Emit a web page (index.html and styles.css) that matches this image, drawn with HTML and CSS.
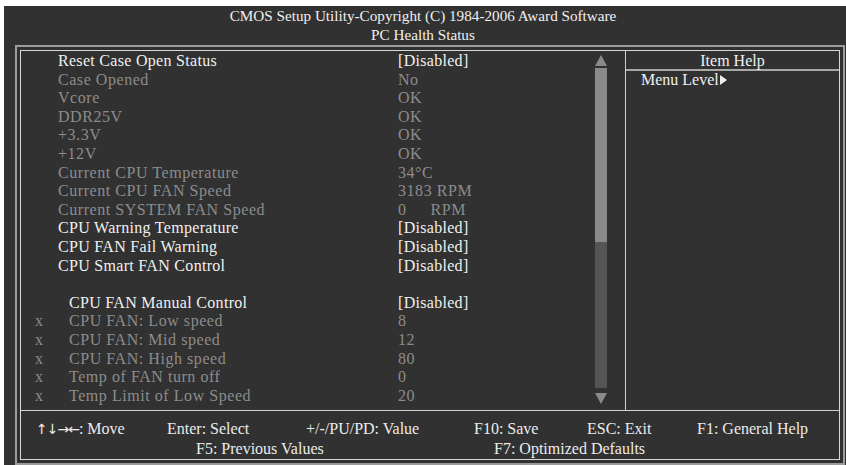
FILE: index.html
```html
<!DOCTYPE html>
<html>
<head>
<meta charset="utf-8">
<link rel="stylesheet" href="styles.css">
</head>
<body>
<div class="screen">
  <div class="title">
    <div>CMOS Setup Utility-Copyright (C) 1984-2006 Award Software</div>
    <div>PC Health Status</div>
  </div>
  <div class="frame">
    <div class="inner">
      <div class="main">
        <div class="left">
          <div class="list">
            <div class="row on"><span class="mk"></span><span class="lb">Reset Case Open Status</span><span class="vl">[Disabled]</span></div>
            <div class="row off"><span class="mk"></span><span class="lb">Case Opened</span><span class="vl">No</span></div>
            <div class="row off"><span class="mk"></span><span class="lb">Vcore</span><span class="vl">OK</span></div>
            <div class="row off"><span class="mk"></span><span class="lb">DDR25V</span><span class="vl">OK</span></div>
            <div class="row off"><span class="mk"></span><span class="lb">+3.3V</span><span class="vl">OK</span></div>
            <div class="row off"><span class="mk"></span><span class="lb">+12V</span><span class="vl">OK</span></div>
            <div class="row off"><span class="mk"></span><span class="lb">Current CPU Temperature</span><span class="vl">34°C</span></div>
            <div class="row off"><span class="mk"></span><span class="lb">Current CPU FAN Speed</span><span class="vl">3183 RPM</span></div>
            <div class="row off"><span class="mk"></span><span class="lb">Current SYSTEM FAN Speed</span><span class="vl">0<span class="gap"></span>RPM</span></div>
            <div class="row on"><span class="mk"></span><span class="lb">CPU Warning Temperature</span><span class="vl">[Disabled]</span></div>
            <div class="row on"><span class="mk"></span><span class="lb">CPU FAN Fail Warning</span><span class="vl">[Disabled]</span></div>
            <div class="row on"><span class="mk"></span><span class="lb">CPU Smart FAN Control</span><span class="vl">[Disabled]</span></div>
            <div class="row blank"></div>
            <div class="row on"><span class="mk"></span><span class="lb ind">CPU FAN Manual Control</span><span class="vl">[Disabled]</span></div>
            <div class="row off"><span class="mk">x</span><span class="lb ind">CPU FAN: Low speed</span><span class="vl">8</span></div>
            <div class="row off"><span class="mk">x</span><span class="lb ind">CPU FAN: Mid speed</span><span class="vl">12</span></div>
            <div class="row off"><span class="mk">x</span><span class="lb ind">CPU FAN: High speed</span><span class="vl">80</span></div>
            <div class="row off"><span class="mk">x</span><span class="lb ind">Temp of FAN turn off</span><span class="vl">0</span></div>
            <div class="row off"><span class="mk">x</span><span class="lb ind">Temp Limit of Low Speed</span><span class="vl">20</span></div>
          </div>
          <div class="scroll">
            <div class="arrow up"></div>
            <div class="track"><div class="thumb"></div></div>
            <div class="arrow down"></div>
          </div>
        </div>
        <div class="help">
          <div class="help-head">Item Help</div>
          <div class="help-body">Menu Level<span class="tri"></span></div>
        </div>
      </div>
      <div class="footer">
        <div class="frow r1">
          <span class="f1"><span class="arr">↑↓→←</span>: Move</span>
          <span class="f2">Enter: Select</span>
          <span class="f3">+/-/PU/PD: Value</span>
          <span class="f4">F10: Save</span>
          <span class="f5">ESC: Exit</span>
          <span class="f6">F1: General Help</span>
        </div>
        <div class="frow r2">
          <span class="g1">F5: Previous Values</span>
          <span class="g2">F7: Optimized Defaults</span>
        </div>
      </div>
    </div>
  </div>
</div>
</body>
</html>
```
FILE: styles.css
```css
html, body {
  margin: 0;
  padding: 0;
  background: #ffffff;
}
body {
  font-family: "Liberation Serif", "Times New Roman", serif;
  font-size: 16px;
  color: #ececec;
}
.screen {
  margin: 6px 0 0 4px;
  height: 459px;
  background: #313131;
  display: flex;
  flex-direction: column;
  overflow: hidden;
}
.title {
  height: 39px;
  line-height: 19px;
  font-size: 15.2px;
  text-align: center;
  padding-right: 4px;
  color: #f0f0f0;
}
.frame {
  margin: 0 1px 0 11px;
  border: 2px solid #9c9c9c;
  padding: 3px;
  height: 410px;
}
.inner {
  border: 1px solid #d8d8d8;
  height: 408px;
  display: flex;
  flex-direction: column;
}
.main {
  height: 359px;
  border-bottom: 1px solid #d0d0d0;
  display: flex;
}
.left {
  width: 604px;
  border-right: 1px solid #d0d0d0;
  display: flex;
}
.list {
  flex: 1;
  padding-top: 1px;
  line-height: 18.6px;
}
.row {
  display: flex;
  height: 18.6px;
  white-space: nowrap;
}
.row.on { color: #f0f0f0; letter-spacing: 0.3px; }
.row.off { color: #8c8c8c; letter-spacing: 0.55px; }
.mk {
  width: 23px;
  padding-left: 14px;
}
.lb {
  width: 340px;
}
.lb.ind {
  padding-left: 11px;
  width: 329px;
}
.vl {
  flex: 1;
}
.gap {
  display: inline-block;
  width: 24px;
}
.scroll {
  width: 12px;
  margin-right: 18px;
  padding-top: 4px;
  display: flex;
  flex-direction: column;
}
.arrow {
  width: 0;
  height: 0;
  border-left: 6px solid transparent;
  border-right: 6px solid transparent;
}
.arrow.up {
  border-bottom: 11px solid #8a8a8a;
}
.arrow.down {
  border-top: 11px solid #8a8a8a;
  margin-top: 5px;
}
.track {
  margin-top: 2px;
  height: 320px;
  background: #555555;
}
.thumb {
  height: 174px;
  background: #8a8a8a;
}
.help {
  flex: 1;
  display: flex;
  flex-direction: column;
}
.help-head {
  height: 18px;
  line-height: 19px;
  text-align: center;
  border-bottom: 2px solid #a8a8a8;
  color: #f0f0f0;
}
.help-body {
  padding-left: 15px;
  line-height: 18.6px;
  color: #f0f0f0;
}
.tri {
  display: inline-block;
  width: 0;
  height: 0;
  border-top: 5px solid transparent;
  border-bottom: 5px solid transparent;
  border-left: 7px solid #f0f0f0;
  margin-left: 1px;
}
.footer {
  flex: 1;
  padding-top: 8px;
  line-height: 19px;
  color: #ececec;
}
.frow {
  display: flex;
  white-space: nowrap;
}
.r1 { padding-left: 15px; }
.f1 { width: 131px; }
.f2 { width: 139px; }
.f3 { width: 168px; }
.f4 { width: 113px; }
.f5 { width: 110px; }
.r2 { padding-left: 175px; }
.g1 { width: 298px; }
.arr {
  font-family: "DejaVu Sans", sans-serif;
  font-size: 14px;
  letter-spacing: -1px;
}
```
